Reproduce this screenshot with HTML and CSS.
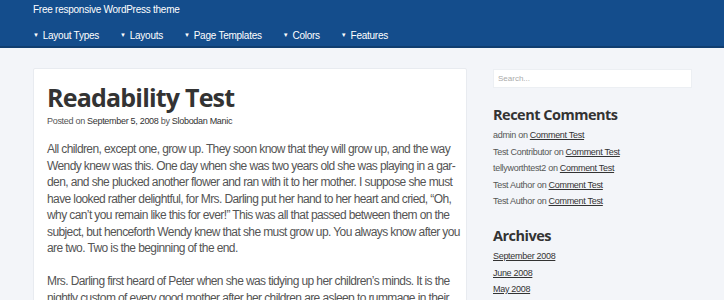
FILE: index.html
```html
<!DOCTYPE html>
<html>
<head>
    <title>Readability Test</title>
    <link rel="stylesheet" href="styles.css">
</head>
<body>
    <div class="header">
        <div class="tagline">Free responsive WordPress theme</div>
        <ul class="nav">
            <li><span class="arrow">&#9660;</span>Layout Types</li>
            <li><span class="arrow">&#9660;</span>Layouts</li>
            <li><span class="arrow">&#9660;</span>Page Templates</li>
            <li><span class="arrow">&#9660;</span>Colors</li>
            <li><span class="arrow">&#9660;</span>Features</li>
        </ul>
    </div>

    <div class="main">
        <div class="content">
            <h1>Readability Test</h1>
            <div class="meta">Posted on <a href="#">September 5, 2008</a> by <a href="#">Slobodan Manic</a></div>
            <p>
                <span class="line">All children, except one, grow up. They soon know that they will grow up, and the way</span>
                <span class="line">Wendy knew was this. One day when she was two years old she was playing in a gar-</span>
                <span class="line">den, and she plucked another flower and ran with it to her mother. I suppose she must</span>
                <span class="line">have looked rather delightful, for Mrs. Darling put her hand to her heart and cried, &ldquo;Oh,</span>
                <span class="line">why can&rsquo;t you remain like this for ever!&rdquo; This was all that passed between them on the</span>
                <span class="line">subject, but henceforth Wendy knew that she must grow up. You always know after you</span>
                <span class="line">are two. Two is the beginning of the end.</span>
            </p>
            <p>
                <span class="line">Mrs. Darling first heard of Peter when she was tidying up her children&rsquo;s minds. It is the</span>
                <span class="line">nightly custom of every good mother after her children are asleep to rummage in their</span>
                <span class="line">minds and put things straight for next morning.</span>
            </p>
        </div>

        <div class="sidebar">
            <input class="search" type="text" placeholder="Search...">

            <h3>Recent Comments</h3>
            <ul class="widget">
                <li>admin on <a href="#">Comment Test</a></li>
                <li>Test Contributor on <a href="#">Comment Test</a></li>
                <li>tellyworthtest2 on <a href="#">Comment Test</a></li>
                <li>Test Author on <a href="#">Comment Test</a></li>
                <li>Test Author on <a href="#">Comment Test</a></li>
            </ul>

            <h3>Archives</h3>
            <ul class="widget">
                <li><a href="#">September 2008</a></li>
                <li><a href="#">June 2008</a></li>
                <li><a href="#">May 2008</a></li>
            </ul>
        </div>
    </div>
</body>
</html>
```

FILE: styles.css
```css
body {
    margin: 0;
    background: #f3f5f9;
    font-family: 'Liberation Sans', Arial, sans-serif;
    color: #555;
}

a {
    color: #333;
}

.header {
    background: #144d8c;
    border-bottom: 2px solid #103e70;
    height: 46px;
    padding: 0 33px;
    color: #fff;
    font-size: 10px;
    letter-spacing: -0.25px;
}

.tagline {
    padding-top: 3px;
    line-height: 13px;
}

.nav {
    list-style: none;
    margin: 0;
    padding: 0;
    display: flex;
    margin-top: 13px;
    line-height: 13px;
}

.nav li {
    margin-right: 21px;
}

.nav .arrow {
    font-size: 6px;
    vertical-align: 2px;
    margin-right: 4px;
}

.main {
    display: flex;
    padding: 20px 0 0 33px;
    gap: 26px;
}

.content {
    box-sizing: border-box;
    width: 434px;
    background: #fff;
    border: 1px solid #e8ebf0;
    border-radius: 2px;
    padding: 10px 13px 0;
    flex-shrink: 0;
}

h1 {
    font-family: 'Open Sans', sans-serif;
    font-size: 25px;
    font-weight: 700;
    letter-spacing: -0.8px;
    color: #333;
    margin: 0;
    line-height: 36px;
}

.meta {
    font-size: 9px;
    letter-spacing: -0.3px;
    color: #555;
    line-height: 12px;
}

.meta a {
    text-decoration: none;
}

.content p {
    font-size: 12px;
    letter-spacing: -0.6px;
    line-height: 16.5px;
    margin: 14px 0 0;
}

.content p + p {
    margin-top: 16.5px;
}

.line {
    display: block;
    white-space: nowrap;
}

.sidebar {
    width: 199px;
}

.search {
    display: block;
    box-sizing: border-box;
    width: 199px;
    height: 19px;
    margin-top: 1px;
    border: 1px solid #eceff3;
    background: #fff;
    padding: 0 4px;
    font-size: 8px;
    font-family: 'Liberation Sans', Arial, sans-serif;
    outline: none;
}

.search::placeholder {
    color: #aaa;
}

h3 {
    font-family: 'Open Sans', sans-serif;
    font-size: 14.5px;
    font-weight: 700;
    letter-spacing: -0.5px;
    color: #333;
    margin: 17px 0 0;
    line-height: 20px;
}

.widget {
    list-style: none;
    margin: 2px 0 0;
    padding: 0;
    font-size: 9px;
    letter-spacing: -0.3px;
    color: #555;
}

.widget li {
    line-height: 16.5px;
}

.widget a {
    color: #333;
    text-decoration: underline;
}

.widget + h3 {
    margin-top: 16.5px;
}
```
